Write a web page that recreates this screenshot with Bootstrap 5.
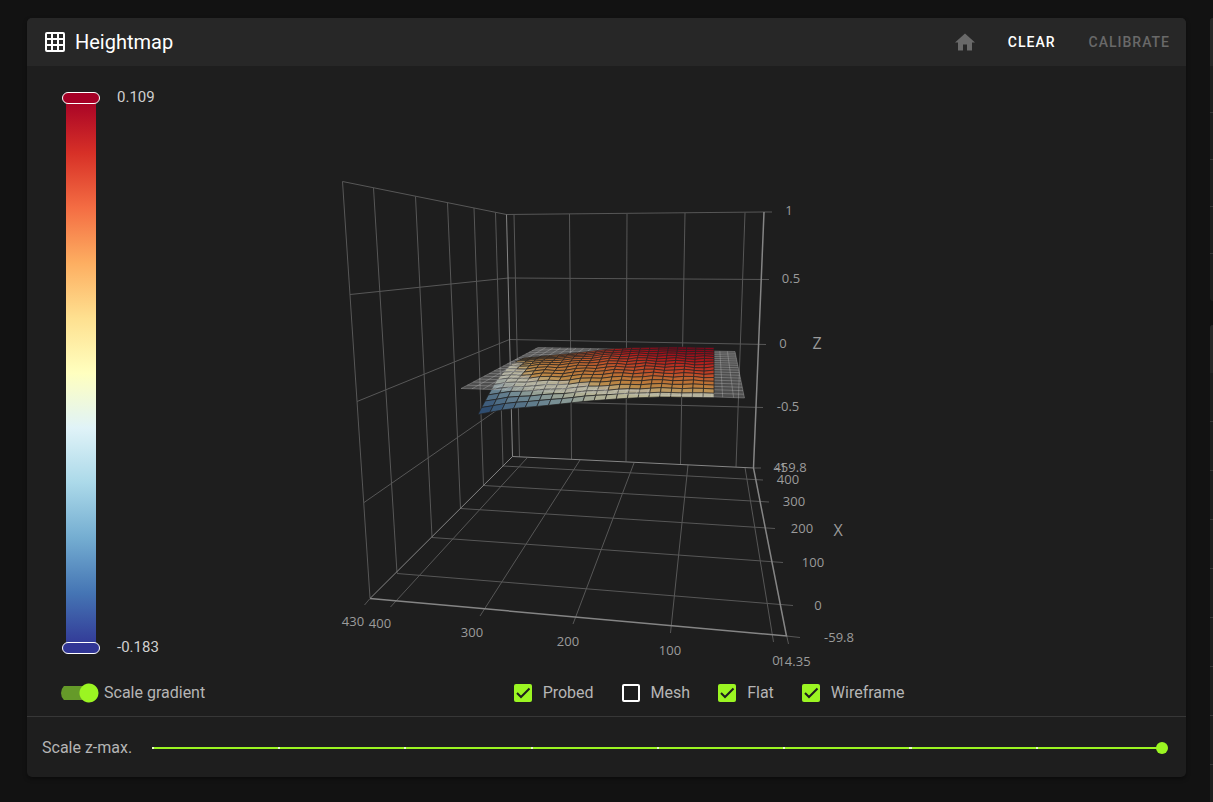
<!DOCTYPE html>
<html lang="en">
<head>
<meta charset="utf-8">
<meta name="viewport" content="width=device-width, initial-scale=1">
<title>Heightmap</title>
<link href="https://cdn.jsdelivr.net/npm/bootstrap@5.3.0/dist/css/bootstrap.min.css" rel="stylesheet">
<style>
body{background:#121212;color:#b5b5b5;font-family:Roboto,sans-serif;font-size:16px;line-height:24px}
.page{padding:18px 0 0 27px;gap:24px;height:100vh;min-height:801px}
.panel{background:#1e1e1e;border:0;border-radius:5px;color:inherit;box-shadow:0 2px 4px rgba(0,0,0,.4)}
.panel-head{background:#272727;height:48px;padding:0 16px 0 18px;border-radius:5px 5px 0 0}
.panel-head h1{font-size:20px;font-weight:400;color:#fff;line-height:32px;margin:0 0 0 10px}
.tool{font-size:14px;font-weight:500;letter-spacing:1px;line-height:20px;padding:0;border:0;color:#fff;margin-left:33px}
.tool:disabled{color:#696969;border:0;opacity:1}
.side{width:3px;overflow:hidden;gap:24px}
.side-card{background:#1e1e1e;border-radius:5px 0 0 5px;overflow:hidden}
.side-head{background:#272727;height:48px}
.side-row{height:47px;border-bottom:1px solid #373737;flex-shrink:0}
.side-row:last-child{border-bottom:0}
.tall .side-row{height:49px}
.scale-col{width:150px;padding:26px 0 0 35px;gap:17px;font-size:15px}
.scale-text{height:560px;line-height:10px;color:#d0d0d0}
.scale-bar{position:relative;width:38px;height:562px}
.scale-bar::before{content:"";display:block;width:30px;height:550px;margin:0 auto;position:relative;top:6px;background:linear-gradient(#a50026,#d73027 10%,#f46d43 20%,#fdae61 30%,#fee090 40%,#ffffbf 50%,#e0f3f8 60%,#abd9e9 70%,#74add1 80%,#4575b4 90%,#313695)}
.scale-bar input{position:absolute;left:0;top:562px;width:562px;height:38px;margin:0;appearance:none;-webkit-appearance:none;background:none;transform:rotate(-90deg);transform-origin:0 0;pointer-events:none}
.scale-bar input::-webkit-slider-thumb{-webkit-appearance:none;width:12px;height:38px;border:1px solid #fff;border-radius:6px;pointer-events:auto}
.thumb-low::-webkit-slider-thumb{background:#313695}
.thumb-high::-webkit-slider-thumb{background:#a50026}
.scene text{font-family:"Open Sans","Noto Sans",sans-serif;font-size:13px;fill:#9b9b9b;text-anchor:middle}
.scene .axis-name{font-size:16px}
.options{height:46px;padding-left:34px;gap:27px}
.choices{gap:28px}
.toggle{gap:5px}
.toggle input{appearance:none;-webkit-appearance:none;width:38px;height:20px;margin:0;background:radial-gradient(circle at 28px 10px,#9bf522 9px,transparent 10px),linear-gradient(#659a29,#659a29) 0 3px/32px 14px no-repeat;border-radius:10px}
.tick-item{gap:11px}
.tick-item .form-check-input{width:18px;height:18px;margin:0;border:2px solid #fff;border-radius:2px;background-color:transparent;box-shadow:none}
.tick-item .form-check-input:checked{border:0;background-color:#9bf522;background-size:18px 18px;background-image:url("data:image/svg+xml,%3csvg xmlns='http://www.w3.org/2000/svg' viewBox='0 0 18 18'%3e%3cpath fill='none' stroke='%231e1e1e' stroke-width='2' d='M3 9l4 4 8.500-8.500'/%3e%3c/svg%3e")}
.zmax{border-top:1px solid #373737;height:61px;padding:2px 18px 0 15px;gap:14px}
.zmax label{white-space:nowrap}
.zslider{flex:1;min-width:0;height:12px;appearance:none;-webkit-appearance:none;margin:0;background:none}
.zslider::-webkit-slider-runnable-track{height:12px;background:repeating-linear-gradient(90deg,#e6fcc5 0 2px,transparent 2px 12.500%) 6px 5px/calc(100% - 12px) 2px no-repeat,linear-gradient(#9bf522,#9bf522) 6px 5px/calc(100% - 12px) 2px no-repeat}
.zslider::-webkit-slider-thumb{-webkit-appearance:none;width:12px;height:12px;border-radius:50%;background:#9bf522}
</style>
</head>
<body>
<div class="page d-flex align-items-start">
<main class="panel card flex-fill">
  <header class="panel-head d-flex align-items-center">
    <svg width="20" height="20" viewBox="0 0 20 20" aria-hidden="true"><path fill="#fff" fill-rule="evenodd" d="M2 0h16a2 2 0 0 1 2 2v16a2 2 0 0 1-2 2H2a2 2 0 0 1-2-2V2a2 2 0 0 1 2-2zM2 2v4h4V2zm6 0v4h4V2zm6 0v4h4V2zM2 8v4h4V8zm6 0v4h4V8zm6 0v4h4V8zM2 14v4h4v-4zm6 0v4h4v-4zm6 0v4h4v-4z"/></svg>
    <h1>Heightmap</h1>
    <button class="btn tool ms-auto" disabled aria-label="Home"><svg class="d-block" width="20" height="18" viewBox="0 0 20 18"><path fill="#696969" d="M8 17.500v-6h4v6h5v-8h3L10 .5 0 9.500h3v8z"/></svg></button>
    <button class="btn tool">CLEAR</button>
    <button class="btn tool" disabled>CALIBRATE</button>
  </header>
  <div class="d-flex">
    <div class="scale-col d-flex flex-shrink-0">
      <div class="scale-bar">
        <input class="thumb-low" type="range" min="-0.183" max="0.109" step="0.001" value="-0.183" aria-label="Lowest height">
        <input class="thumb-high" type="range" min="-0.183" max="0.109" step="0.001" value="0.109" aria-label="Highest height">
      </div>
      <div class="scale-text d-flex flex-column justify-content-between"><span>0.109</span><span>-0.183</span></div>
    </div>
    <div class="flex-fill">
    <svg class="scene d-block w-100" viewBox="177 66 1009 604" role="img" aria-label="Probed surface in three dimensions">
      <g fill="none" stroke="#575757">
        <path d="M370 598 342.500 181.500 506.500 214.500 762 212M373.500 188 397 573M415.500 196.500 432 537M447.500 202.500 460.500 509M474 208 483.500 486M495.500 212.500 503 466M350 294.500 508.500 278 769 279.500M357 401.500 509.500 339.500 766 344.500M364 502.500 510 401 763 407.500M762 212h10M514 214.500 519.500 457M569.500 214 571.500 459M627 214 626 461.500M685 213 680.500 464M745 212.500 736 467M754 468h7"/>
        <path d="M503 466 763 480M483.500 485.500 769 502M460.500 508.500 775 528.500M432 537.500 783 562.500M397 573.500 793 605.500M370 598.500 364.500 605M527 458 390.500 607M580 460 480 616M634 463 573 624M688 465 670.500 633M745 467.500 773.500 642M786.500 636 800 637.500M786.500 635 788.500 644"/>
        <path stroke="#858585" d="M506.500 214.500 512.500 456.500 754 468M512.500 456.500 370 598.500"/>
        <path stroke="#858585" stroke-width="1.500" d="M764 212 753.500 468 786.500 636 370 598.500"/>
      </g>
      <g id="surface-below"></g><g id="flat-plane"></g><g id="surface-above"></g>
      <g>
        <text x="789" y="215">1</text><text x="791" y="283">0.5</text><text x="783" y="348">0</text><text x="788" y="411">-0.5</text>
        <text x="781" y="472">-1</text><text x="790" y="472">459.8</text><text x="788" y="484">400</text><text x="794" y="506">300</text><text x="802" y="533">200</text><text x="813" y="567">100</text><text x="818" y="610">0</text><text x="839" y="642">-59.8</text>
        <text x="353" y="626">430</text><text x="380" y="628">400</text><text x="472" y="637">300</text><text x="568" y="646">200</text><text x="670" y="655">100</text><text x="776" y="665">0</text><text x="794" y="666">14.35</text>
        <text class="axis-name" x="817" y="349">Z</text><text class="axis-name" x="838" y="536">X</text>
      </g>
    </svg>
    </div>
  </div>
  <div class="options d-flex align-items-center">
    <label class="toggle d-flex align-items-center"><input type="checkbox" role="switch" checked>Scale gradient</label>
    <div class="choices d-flex flex-fill justify-content-center">
      <label class="tick-item d-flex align-items-center"><input class="form-check-input" type="checkbox" checked>Probed</label>
      <label class="tick-item d-flex align-items-center"><input class="form-check-input" type="checkbox">Mesh</label>
      <label class="tick-item d-flex align-items-center"><input class="form-check-input" type="checkbox" checked>Flat</label>
      <label class="tick-item d-flex align-items-center"><input class="form-check-input" type="checkbox" checked>Wireframe</label>
    </div>
  </div>
  <div class="zmax d-flex align-items-center">
    <label for="zmax">Scale z-max.</label>
    <input id="zmax" class="zslider" type="range" min="0" max="8" value="8">
  </div>
</main>
<aside class="side d-flex flex-column flex-shrink-0 align-self-stretch">
  <div class="side-card flex-shrink-0"><div class="side-head"></div><div class="side-row"></div><div class="side-row"></div><div class="side-row"></div><div class="side-row"></div><div class="side-row"></div></div>
  <div class="side-card tall flex-shrink-0"><div class="side-head"></div><div class="side-row"></div><div class="side-row"></div><div class="side-row"></div><div class="side-row"></div><div class="side-row"></div><div class="side-row"></div><div class="side-row"></div><div class="side-row"></div><div class="side-row"></div></div>
</aside>
</div>
<script src="https://cdn.jsdelivr.net/npm/bootstrap@5.3.0/dist/js/bootstrap.bundle.min.js"></script>
<script>
const mix = (a, b, t) => a + (b - a) * t;
function along(points, t) {
  let i = 0;
  while (i < points.length - 2 && t > points[i + 1][0]) i++;
  const a = points[i], b = points[i + 1], k = (t - a[0]) / (b[0] - a[0]);
  return a.slice(1).map((v, n) => mix(v, b[n + 1], k));
}
// Edges of the probed surface: parameter, x, y.
const front = [[0,478,414.5],[.12,508,409],[.3,552,405],[.45,588,401],[.6,623,398.500],[.75,657,397],[1,714,397.500]];
const back = [[0,524,358],[.12,546,356],[.3,581,352.500],[.45,610,349],[.6,637,347.500],[.8,676,347],[1,714,347.500]];
const left = [[0,478,414.5],[.25,488,395],[.45,496,381],[.7,509,367],[.85,517,361],[1,524,358]];
// Shaded colours of the height scale.
const shades = [[0,33,62,102],[.15,66,97,126],[.3,112,138,148],[.42,175,176,150],[.5,190,184,148],[.57,186,136,70],[.66,188,112,52],[.78,193,68,38],[.88,178,25,28],[1,120,0,25]];
// Height levels at the front, middle and back.
const frontLevel = [[0,0],[.12,.14],[.3,.28],[.5,.4],[.75,.46],[1,.47]];
const midLevel = [[0,.4],[.15,.56],[.4,.64],[.7,.76],[1,.8]];
const backLevel = [[0,.59],[.15,.66],[.35,.78],[.55,.92],[.8,.99],[1,.98]];
const depth = v => 1.5 * v / (1 + .5 * v);
function point(u, v) {
  const w = depth(v), f = along(front, u), b = along(back, u), l = along(left, w);
  return [0, 1].map(n => mix(f[n], b[n], w) + (1 - u) ** 2 * (l[n] - mix(front[0][n + 1], back[0][n + 1], w))
    + (n ? Math.sin(u * 38 + v * 8) * .8 * Math.sin(v * Math.PI) : 0));
}
function level(u, v) {
  const w = depth(v), m = along(midLevel, u)[0];
  return w < .5 ? mix(along(frontLevel, u)[0], m, w * 2) : mix(m, along(backLevel, u)[0], w * 2 - 1);
}
const cols = 21, rows = 16, layers = {below: "", above: ""};
for (let j = rows - 1; j >= 0; j--) for (let i = 0; i < cols; i++) {
  const a = [point(i/cols, j/rows), point((i+1)/cols, j/rows), point((i+1)/cols, (j+1)/rows), point(i/cols, (j+1)/rows)];
  const z = level((i+.5)/cols, (j+.5)/rows);
  const c = along(shades, z).map(Math.round);
  layers[z < .53 ? "below" : "above"] += `<polygon points="${a.map(p => p.map(n => n.toFixed(1))).join(" ")}" fill="rgb(${c})" stroke="#222" stroke-opacity=".7"/>`;
}
document.getElementById("surface-below").innerHTML = layers.below;
document.getElementById("surface-above").innerHTML = layers.above;

// The flat reference plane, a fine mesh.
const corner = {fl: [461,388.5], fr: [744.5,398], bl: [538,347.5], br: [735,351.500]};
const flat = (u, v) => { const w = depth(v); return [0, 1].map(n => mix(mix(corner.fl[n], corner.fr[n], u), mix(corner.bl[n], corner.br[n], u), w)); };
let mesh = `<polygon points="${corner.fl} ${corner.fr} ${corner.br} ${corner.bl}" fill="#aaa" fill-opacity=".35"/><g stroke="#ccc" stroke-opacity=".3">`;
for (let i = 0; i <= 26; i++) mesh += `<path d="M${flat(i/26, 0)}L${flat(i/26, 1)}"/>`;
for (let j = 0; j <= 18; j++) mesh += `<path d="M${flat(0, j/18)}L${flat(1, j/18)}"/>`;
document.getElementById("flat-plane").innerHTML = mesh + "</g>";
</script>
</body>
</html>
